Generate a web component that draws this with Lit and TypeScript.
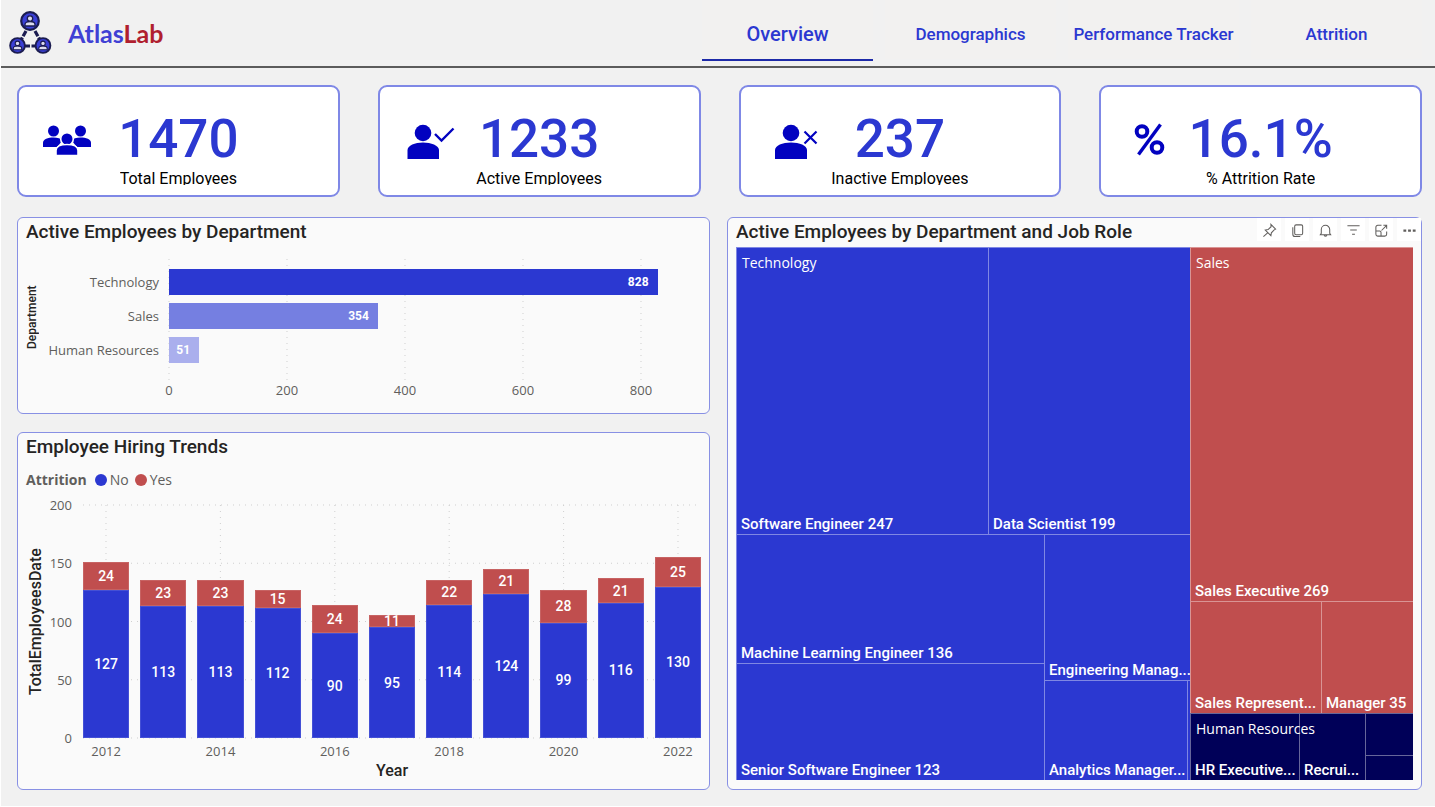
import { LitElement, html, css, svg, nothing } from "lit";
import { customElement, property } from "lit/decorators.js";

const blue = "#2b38d1";

const shared = css`
  * {
    box-sizing: border-box;
  }
  :host {
    display: block;
  }
  .panel {
    height: 100%;
    display: flex;
    flex-direction: column;
    padding: 0 8px 8px;
    background: #fafafa;
    border: 1px solid #8890e4;
    border-radius: 6px;
  }
  .head {
    display: flex;
    justify-content: space-between;
    height: 29px;
  }
  .title {
    margin: 0;
    font-size: 19px;
    line-height: 28px;
    font-weight: 500;
    color: #252423;
    white-space: nowrap;
  }
  .axis {
    font-family: "Open Sans", "Noto Sans", sans-serif;
    font-size: 13px;
    line-height: 20px;
    color: #605e5c;
    white-space: nowrap;
  }
  .vertical {
    writing-mode: vertical-rl;
    transform: rotate(180deg);
    text-align: center;
    font-weight: 500;
    color: #252423;
    white-space: nowrap;
  }
  .plot {
    display: grid;
  }
  .plot > * {
    grid-area: 1 / 1;
  }
  .grid {
    width: 100%;
    height: 0;
    min-height: 100%;
    overflow: visible;
  }
  .grid line {
    stroke: #cfcfcf;
    stroke-width: 1;
    stroke-dasharray: 1 5;
  }
`;

const people = svg`
  <g fill="#0202c0">
    <circle cx="14.5" cy="19" r="5.5" /><circle cx="41.5" cy="19" r="5.5" />
    <path d="M4 35v-4c0-4 5-5.500 10.500-5.500 4 0 7.500 1 9 3l-5.500 6.500z" />
    <path d="M52 35v-4c0-4-5-5.500-10.500-5.500-4 0-7.500 1-9 3l5.500 6.500z" />
    <g stroke="#fff" stroke-width="1.600">
      <circle cx="28" cy="27" r="6.300" />
      <path d="M17 43.500v-5c0-4 5-6 11-6s11 2 11 6v5z" />
    </g>
  </g>`;
const active = svg`
  <g fill="#0202c0" transform="translate(3 -1)">
    <circle cx="20" cy="22" r="8.300" />
    <path d="M4.500 48v-9c0-4.500 7.500-7.500 15.500-7.500s16 3 16 7.500v9z" />
    <path d="M32 23l6.500 6.500L50.500 17.500" fill="none" stroke="#0202c0" stroke-width="2.400" />
  </g>`;
const inactive = svg`
  <g fill="#0202c0" transform="translate(7 -1)">
    <circle cx="23" cy="22" r="8.300" />
    <path d="M7 48v-9c0-4.500 7.500-7.500 16-7.500s16 3 16 7.500v9z" />
    <path d="M36.500 20.500l12 12M48.500 20.500l-12 12" fill="none" stroke="#0202c0" stroke-width="2.200" />
  </g>`;
const percent = svg`
  <g fill="none" stroke="#0202c0" stroke-width="4" transform="translate(1 -1)">
    <circle cx="20" cy="20.500" r="5.300" /><circle cx="35" cy="36.500" r="5.300" />
    <path d="M38.500 13.500L16.500 43.500" stroke-width="3.400" />
  </g>`;

@customElement("kpi-card")
class KpiCard extends LitElement {
  @property() value = "";
  @property() label = "";
  @property({ attribute: false }) icon: unknown = nothing;
  static styles = [
    shared,
    css`
      .card {
        display: grid;
        grid-template-columns: 96px minmax(0, 1fr) 96px;
        align-content: start;
        height: 112px;
        background: #fff;
        border: 2px solid #7f88e6;
        border-radius: 9px;
        padding-top: 23px;
      }
      .icon {
        width: 56px;
        height: 56px;
        margin-top: 2px;
        justify-self: center;
        overflow: visible;
      }
      .value {
        display: flex;
        justify-content: center;
        font-size: 53px;
        line-height: 58px;
        font-weight: 500;
        color: #2b38d1;
        white-space: nowrap;
      }
      .label {
        grid-column: 1 / -1;
        justify-self: center;
        height: 17px;
        overflow: hidden;
        font-size: 16px;
        line-height: 21px;
        color: #000;
        white-space: nowrap;
      }
    `,
  ];
  render() {
    return html`<article class="card">
      <svg class="icon" viewBox="0 0 56 56" aria-hidden="true">${this.icon}</svg>
      <div class="value">${this.value}</div>
      <div class="label">${this.label}</div>
    </article>`;
  }
}

@customElement("department-chart")
class DepartmentChart extends LitElement {
  static styles = [
    shared,
    css`
      .chart {
        display: grid;
        grid-template-columns: 13px 120px 1fr;
        padding: 12px 1px 5px 0;
      }
      .name {
        font-size: 12px;
        line-height: 13px;
        padding-top: 4px;
      }
      .labels,
      .bars {
        display: grid;
        grid-auto-rows: 26px;
        gap: 8px;
        padding: 10px 0 17px;
      }
      .labels {
        line-height: 26px;
        text-align: right;
      }
      .plot {
        margin-left: 10px;
      }
      .bar {
        font-size: 12px;
        line-height: 26px;
        font-weight: 700;
        color: #fff;
        text-align: right;
        padding-right: 9px;
      }
      .ticks {
        grid-column: 3;
        display: grid;
        grid-template-columns: repeat(9, 1fr);
        margin-left: 10px;
      }
      .tick {
        grid-row: 1;
        width: 0;
        display: flex;
        justify-content: center;
      }
    `,
  ];
  rows = [
    { name: "Technology", n: 828, c: blue },
    { name: "Sales", n: 354, c: "#757fe1" },
    { name: "Human Resources", n: 51, c: "#aaafed" },
  ];
  ticks = [0, 200, 400, 600, 800];
  render() {
    return html`<section class="panel">
      <div class="head"><h2 class="title">Active Employees by Department</h2></div>
      <div class="chart">
        <div class="vertical name">Department</div>
        <div class="axis labels">${this.rows.map((r) => html`<span>${r.name}</span>`)}</div>
        <div class="plot">
          <svg class="grid" aria-hidden="true">
            ${this.ticks.map((t) => {
              const x = `${(t / 900) * 100}%`;
              return svg`<line x1=${x} x2=${x} y1="0" y2="100%" />`;
            })}
          </svg>
          <div class="bars">
            ${this.rows.map(
              (r) => html`<div class="bar" style="width:${(r.n / 900) * 100}%;background:${r.c}">${r.n}</div>`
            )}
          </div>
        </div>
        <div class="axis ticks">
          ${this.ticks.map((t, i) => html`<span class="tick" style="grid-column:${i * 2 + 1}">${t}</span>`)}
        </div>
      </div>
    </section>`;
  }
}

@customElement("hiring-chart")
class HiringChart extends LitElement {
  static styles = [
    shared,
    css`
      .legend {
        display: flex;
        align-items: center;
        gap: 3px;
        margin: 8px 0 15px;
        font-size: 14px;
      }
      .legend b {
        margin-right: 5px;
      }
      .dot {
        width: 12px;
        height: 12px;
        border-radius: 50%;
        background: #2b38d1;
      }
      .dot.yes {
        background: #c04e4e;
        margin-left: 3px;
      }
      .chart {
        display: grid;
        grid-template-columns: 20px 26px 1fr;
        grid-template-rows: 233px auto auto;
      }
      .name {
        font-size: 16px;
        line-height: 20px;
      }
      .scale {
        display: flex;
        flex-direction: column;
        justify-content: space-between;
      }
      .scale span {
        height: 0;
        display: flex;
        align-items: center;
        justify-content: flex-end;
      }
      .plot {
        margin-left: 11px;
      }
      .bars {
        height: 233px;
        display: grid;
        grid-template-columns: repeat(11, 1fr);
        column-gap: 11px;
      }
      .stack {
        display: flex;
        flex-direction: column;
        justify-content: flex-end;
      }
      .seg {
        display: flex;
        align-items: center;
        justify-content: center;
        overflow: hidden;
        font-size: 14px;
        line-height: 16px;
        font-weight: 500;
        color: #fff;
        background: #2b38d1;
        box-shadow: inset 0 0 0 1px rgba(255, 255, 255, 0.12);
      }
      .seg.yes {
        background: #c04e4e;
      }
      .years {
        grid-column: 3;
        margin: 3px 0 0 11px;
        display: grid;
        grid-template-columns: repeat(11, 1fr);
        column-gap: 11px;
        text-align: center;
      }
      .year {
        grid-column: 3;
        margin-left: 11px;
        text-align: center;
        font-size: 16px;
        line-height: 20px;
        font-weight: 500;
        color: #252423;
      }
    `,
  ];
  no = [127, 113, 113, 112, 90, 95, 114, 124, 99, 116, 130];
  yes = [24, 23, 23, 15, 24, 11, 22, 21, 28, 21, 25];
  render() {
    return html`<section class="panel">
      <div class="head"><h2 class="title">Employee Hiring Trends</h2></div>
      <div class="axis legend">
        <b>Attrition</b><i class="dot"></i><span>No</span><i class="dot yes"></i><span>Yes</span>
      </div>
      <div class="chart">
        <div class="vertical name">TotalEmployeesDate</div>
        <div class="axis scale">${[200, 150, 100, 50, 0].map((t) => html`<span>${t}</span>`)}</div>
        <div class="plot">
          <svg class="grid" aria-hidden="true">
            ${[0, 25, 50, 75, 100].map((y) => svg`<line x1="0" x2="100%" y1="${y}%" y2="${y}%" />`)}
            ${[0, 2, 4, 6, 8, 10].map((i) => {
              const x = `${((23 + i * 57.2) / 618) * 100}%`;
              return svg`<line x1=${x} x2=${x} y1="0" y2="100%" />`;
            })}
          </svg>
          <div class="bars">
            ${this.no.map(
              (n, i) => html`<div class="stack">
                <div class="seg yes" style="height:${this.yes[i] / 2}%">${this.yes[i]}</div>
                <div class="seg" style="height:${n / 2}%">${n}</div>
              </div>`
            )}
          </div>
        </div>
        <div class="axis years">
          ${this.no.map((_, i) => html`<span>${i % 2 ? nothing : 2012 + i}</span>`)}
        </div>
        <div class="year">Year</div>
      </div>
    </section>`;
  }
}

const tools = [
  { name: "Pin visual", d: svg`<path d="M9.500 1.500l5 5-1.500.800-3 3.200-.500 3-6-6 3-.500 3.200-3zM6 10.500L1.500 14.500" />` },
  { name: "Copy visual", d: svg`<rect x="5" y="2" width="8.500" height="10.500" rx="1.500" /><path d="M3 4.500v7.500a2.500 2.500 0 0 0 2.500 2.500h5.500" />` },
  { name: "Set alert", d: svg`<path d="M3.500 11V7a4.500 4.500 0 0 1 9 0v4l1 1.500h-11zM6.500 12.500a1.500 1.500 0 0 0 3 0" />` },
  { name: "Filters", d: svg`<path d="M1.500 3h13M4.500 7.500h7M6.500 12h3" />` },
  { name: "Focus mode", d: svg`<path d="M8 2.500H4a2 2 0 0 0-2 2v7.500a2 2 0 0 0 2 2h7.500a2 2 0 0 0 2-2V9M2 8.500h4a1.500 1.500 0 0 1 1.500 1.500v4M8 8l5.500-5.500M10 2.500h3.500V6" />` },
  { name: "More options", d: svg`<path d="M1.500 8h3M6.500 8h3M11.500 8h3" stroke-width="2.400" />` },
];

@customElement("role-treemap")
class RoleTreemap extends LitElement {
  static styles = [
    shared,
    css`
      .panel {
        padding-bottom: 9px;
      }
      .tools {
        display: flex;
        gap: 4px;
        margin-right: -8px;
      }
      .tool {
        width: 24px;
        height: 23px;
        padding: 1px 0 0;
        border: 0;
        background: #fff;
        display: grid;
        place-items: center;
      }
      .tool svg {
        width: 15px;
        height: 15px;
        fill: none;
        stroke: #605e5c;
        stroke-width: 1.1;
      }
      .map {
        flex: 1;
        display: grid;
        grid-template-columns: 454fr 223fr;
      }
      .map div {
        min-width: 0;
        min-height: 0;
      }
      .split {
        display: grid;
      }
      .group {
        display: grid;
        position: relative;
      }
      .group-name {
        position: absolute;
        top: 6px;
        left: 6px;
        font-family: "Open Sans", "Noto Sans", sans-serif;
        font-size: 14px;
        line-height: 20px;
        color: #fff;
      }
      .cell {
        display: flex;
        align-items: flex-end;
        overflow: hidden;
        padding: 0 0 1px 5px;
        font-size: 15px;
        line-height: 18px;
        font-weight: 500;
        color: #fff;
        white-space: nowrap;
        box-shadow: inset 1px 1px 0 rgba(255, 255, 255, 0.4);
      }
      .tech {
        background: #2b38d1;
        grid-template-rows: 287fr 246fr;
      }
      .right {
        grid-template-rows: 466fr 67fr;
      }
      .sales {
        background: #c04e4e;
        grid-template-rows: 354fr 112fr;
      }
      .hr {
        background: #000058;
        grid-template-columns: 109fr 66fr 48fr;
      }
      .tech-top {
        grid-template-columns: 252fr 202fr;
      }
      .tech-bottom {
        grid-template-columns: 308fr 146fr;
      }
      .ml {
        grid-template-rows: 129fr 117fr;
      }
      .mgr {
        grid-template-rows: 146fr 100fr;
      }
      .analytics {
        grid-template-columns: 143fr 3fr;
      }
      .analytics .cell:empty,
      .hr-rest .cell {
        padding: 0;
      }
      .reps {
        grid-template-columns: 131fr 92fr;
      }
      .hr-rest {
        grid-template-rows: 42fr 25fr;
      }
    `,
  ];
  cell(t?: string) {
    return t ? html`<div class="cell">${t}</div>` : html`<div class="cell"></div>`;
  }
  render() {
    return html`<section class="panel">
      <div class="head">
        <h2 class="title">Active Employees by Department and Job Role</h2>
        <div class="tools">
          ${tools.map(
            (t) => html`<button class="tool" aria-label=${t.name}><svg viewBox="0 0 16 16">${t.d}</svg></button>`
          )}
        </div>
      </div>
      <div class="map">
        <div class="group tech">
          <div class="split tech-top">${this.cell("Software Engineer 247")}${this.cell("Data Scientist 199")}</div>
          <div class="split tech-bottom">
            <div class="split ml">
              ${this.cell("Machine Learning Engineer 136")}${this.cell("Senior Software Engineer 123")}
            </div>
            <div class="split mgr">
              ${this.cell("Engineering Manag...")}
              <div class="split analytics">${this.cell("Analytics Manager...")}${this.cell()}</div>
            </div>
          </div>
          <span class="group-name">Technology</span>
        </div>
        <div class="split right">
          <div class="group sales">
            ${this.cell("Sales Executive 269")}
            <div class="split reps">${this.cell("Sales Represent...")}${this.cell("Manager 35")}</div>
            <span class="group-name">Sales</span>
          </div>
          <div class="group hr">
            ${this.cell("HR Executive...")}${this.cell("Recrui...")}
            <div class="split hr-rest">${this.cell()}${this.cell()}</div>
            <span class="group-name">Human Resources</span>
          </div>
        </div>
      </div>
    </section>`;
  }
}

const member = (x: number, y: number, r: number) => svg`
  <g transform="translate(${x} ${y}) scale(${r / 10})">
    <circle r="8.800" fill="#3a3fd6" stroke="#1b1c50" stroke-width="2.200" />
    <path d="M-5 5v-1.500c0-2 2-3 5-3s5 1 5 3V5z" fill="#dcdcf0" stroke="#1b1c50" stroke-width="1.300" />
    <circle cy="-2.500" r="2.700" fill="#dcdcf0" stroke="#1b1c50" stroke-width="1.300" />
  </g>`;

@customElement("app-root")
class AppRoot extends LitElement {
  static styles = [
    shared,
    css`
      :host {
        font-family: Roboto, "Liberation Sans", sans-serif;
      }
      .page {
        background: #f1f1f1;
        border-left: 1px solid #fff;
        padding-bottom: 16px;
      }
      .top {
        display: flex;
        justify-content: space-between;
        height: 68px;
        border-bottom: 2px solid #5c5c5c;
        padding: 0 13px 0 8px;
      }
      .brand {
        display: flex;
        gap: 16px;
        align-items: center;
        font-family: Lato, "Open Sans", sans-serif;
        font-size: 25px;
        line-height: 28px;
        font-weight: 700;
        color: #4040d4;
      }
      .brand svg {
        width: 43px;
        height: 44px;
      }
      .brand .lab {
        color: #b01f2f;
      }
      .tabs {
        display: grid;
        grid-template-columns: repeat(4, 171px);
        gap: 12px;
        height: 61px;
      }
      .tab {
        display: flex;
        align-items: center;
        justify-content: center;
        padding-top: 8px;
        border-bottom: 2px solid transparent;
        background: #f2f1f0;
        background-clip: padding-box;
        font-size: 17px;
        line-height: 24px;
        font-weight: 500;
        color: #2b38d1;
        text-decoration: none;
        white-space: nowrap;
      }
      .tab.on {
        font-size: 20px;
        border-color: #1d2aa8;
      }
      main {
        padding: 17px 13px 0 16px;
      }
      .kpis {
        display: grid;
        grid-template-columns: repeat(4, minmax(0, 1fr));
        gap: 38px;
        margin-bottom: 20px;
      }
      .charts {
        display: grid;
        grid-template-columns: 693fr 695fr;
        gap: 17px;
      }
      .left {
        display: grid;
        gap: 18px;
      }
    `,
  ];
  render() {
    return html`<div class="page">
      <header class="top">
        <div class="brand">
          <svg viewBox="0 0 43 44" aria-hidden="true">
            <path d="M17 20l-5.500 10M26 20l5.500 10M15 35h13" stroke="#1b1c50" stroke-width="3.200" stroke-dasharray="6 1.500 4" fill="none" />
            ${member(21, 10, 10)}${member(8.5, 34.5, 8.4)}${member(34, 34.5, 8.4)}
          </svg>
          <span>Atlas<span class="lab">Lab</span></span>
        </div>
        <nav class="tabs">
          <a class="tab on" href="#overview" aria-current="page">Overview</a>
          <a class="tab" href="#demographics">Demographics</a>
          <a class="tab" href="#performance">Performance Tracker</a>
          <a class="tab" href="#attrition">Attrition</a>
        </nav>
      </header>
      <main>
        <div class="kpis">
          <kpi-card value="1470" label="Total Employees" .icon=${people}></kpi-card>
          <kpi-card value="1233" label="Active Employees" .icon=${active}></kpi-card>
          <kpi-card value="237" label="Inactive Employees" .icon=${inactive}></kpi-card>
          <kpi-card value="16.1%" label="% Attrition Rate" .icon=${percent}></kpi-card>
        </div>
        <div class="charts">
          <div class="left">
            <department-chart></department-chart>
            <hiring-chart></hiring-chart>
          </div>
          <role-treemap></role-treemap>
        </div>
      </main>
    </div>`;
  }
}
